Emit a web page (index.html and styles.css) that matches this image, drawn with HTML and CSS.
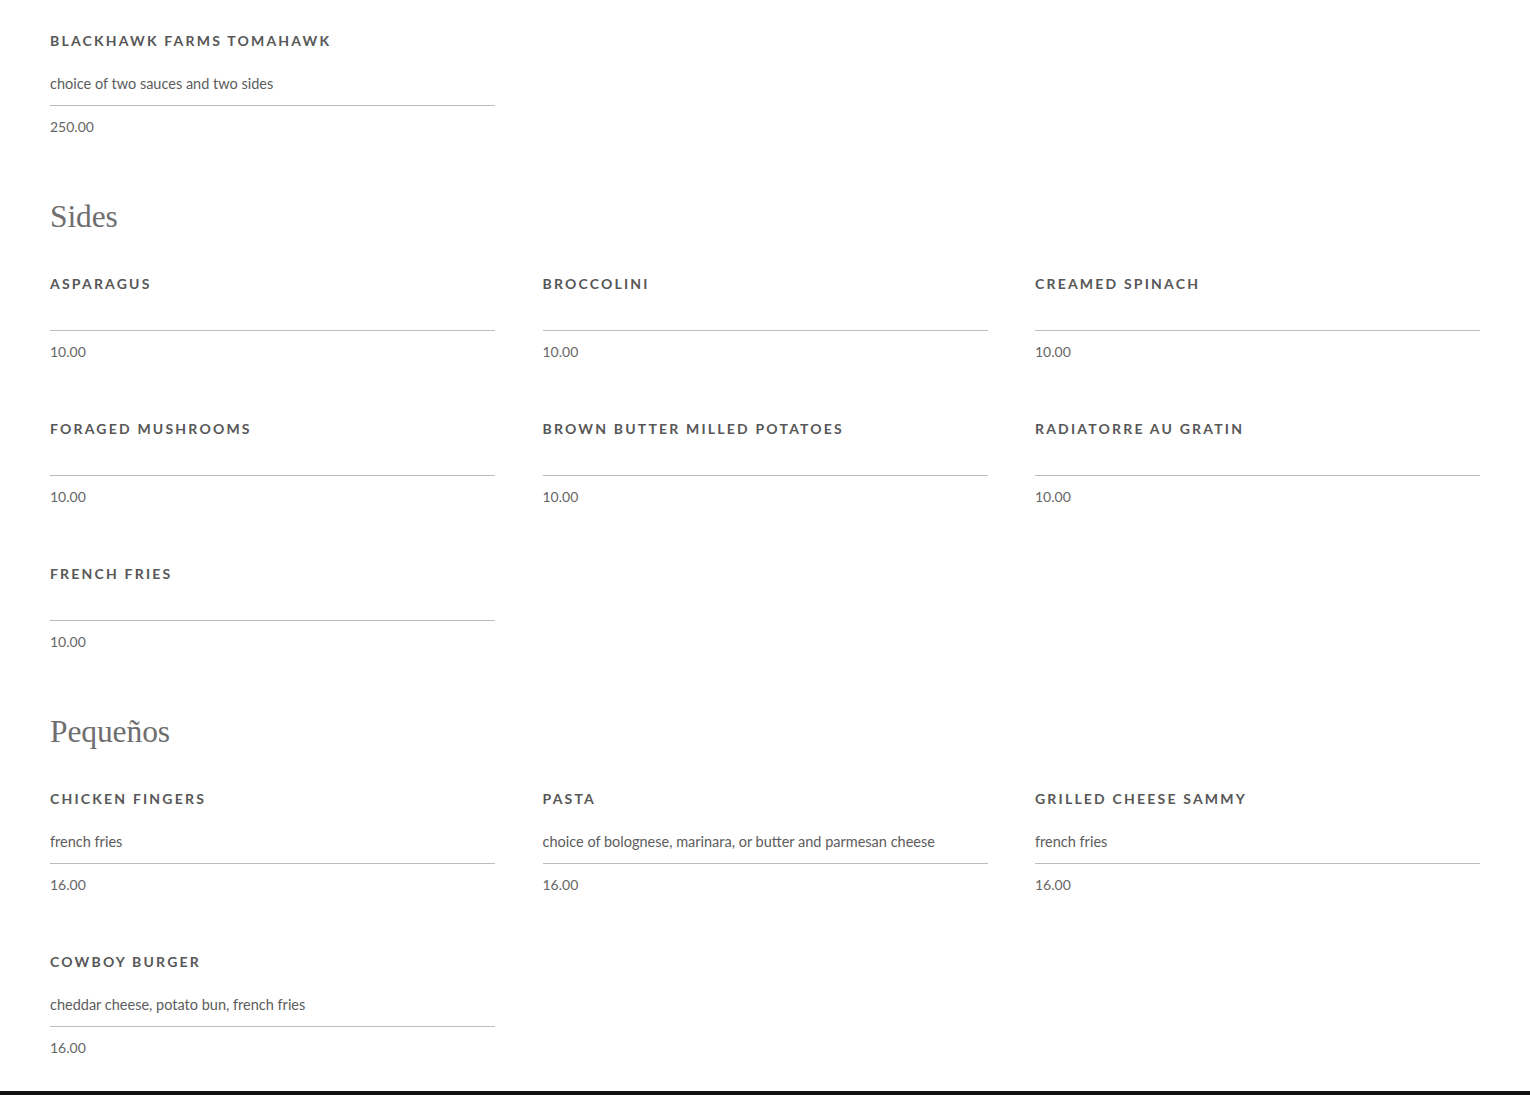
FILE: index.html
```html
<!DOCTYPE html>
<html lang="en">
<head>
<meta charset="utf-8">
<title>Menu</title>
<link rel="stylesheet" href="styles.css">
</head>
<body>
<main class="menu">
  <section class="section section-first">
    <div class="grid">
      <article class="item">
        <h3 class="name">Blackhawk Farms Tomahawk</h3>
        <p class="desc">choice of two sauces and two sides</p>
        <p class="price">250.00</p>
      </article>
    </div>
  </section>

  <section class="section">
    <h2 class="heading">Sides</h2>
    <div class="grid">
      <article class="item"><h3 class="name">Asparagus</h3><p class="desc"></p><p class="price">10.00</p></article>
      <article class="item"><h3 class="name">Broccolini</h3><p class="desc"></p><p class="price">10.00</p></article>
      <article class="item"><h3 class="name">Creamed Spinach</h3><p class="desc"></p><p class="price">10.00</p></article>
      <article class="item"><h3 class="name">Foraged Mushrooms</h3><p class="desc"></p><p class="price">10.00</p></article>
      <article class="item"><h3 class="name">Brown Butter Milled Potatoes</h3><p class="desc"></p><p class="price">10.00</p></article>
      <article class="item"><h3 class="name">Radiatorre au Gratin</h3><p class="desc"></p><p class="price">10.00</p></article>
      <article class="item"><h3 class="name">French Fries</h3><p class="desc"></p><p class="price">10.00</p></article>
    </div>
  </section>

  <section class="section">
    <h2 class="heading">Pequeños</h2>
    <div class="grid">
      <article class="item"><h3 class="name">Chicken Fingers</h3><p class="desc">french fries</p><p class="price">16.00</p></article>
      <article class="item"><h3 class="name">Pasta</h3><p class="desc">choice of bolognese, marinara, or butter and parmesan cheese</p><p class="price">16.00</p></article>
      <article class="item"><h3 class="name">Grilled Cheese Sammy</h3><p class="desc">french fries</p><p class="price">16.00</p></article>
      <article class="item"><h3 class="name">Cowboy Burger</h3><p class="desc">cheddar cheese, potato bun, french fries</p><p class="price">16.00</p></article>
    </div>
  </section>
</main>
<footer class="footer"></footer>
</body>
</html>
```

FILE: styles.css
```css
html, body {
  margin: 0;
  padding: 0;
  background: #ffffff;
}

body {
  font-family: Lato, "Open Sans", "Liberation Sans", sans-serif;
  color: #5c5c5c;
}

.menu {
  padding: 31px 50px 33px;
}

.section {
  margin-top: 60px;
}

.section-first {
  margin-top: 0;
}

.heading {
  margin: 0 0 37px;
  font-family: "Liberation Serif", "DejaVu Serif", serif;
  font-weight: 400;
  font-size: 31.5px;
  line-height: 40px;
  color: #6e6e6e;
  letter-spacing: -0.1px;
}

.grid {
  display: grid;
  grid-template-columns: repeat(3, 1fr);
  column-gap: 47.5px;
  row-gap: 57px;
}

.item {
  display: flex;
  flex-direction: column;
}

.name {
  margin: 0;
  font-size: 14px;
  line-height: 20px;
  font-weight: 700;
  text-transform: uppercase;
  letter-spacing: 2.2px;
  color: #575757;
}

.desc {
  margin: 0;
  padding: 24px 0 12px;
  font-size: 14.5px;
  line-height: 18px;
  color: #5c5c5c;
  border-bottom: 1px solid #bdbdbd;
}

.price {
  margin: 0;
  padding-top: 11px;
  font-size: 14px;
  line-height: 20px;
  color: #666666;
}

.footer {
  height: 4px;
  background: #111111;
}
```
